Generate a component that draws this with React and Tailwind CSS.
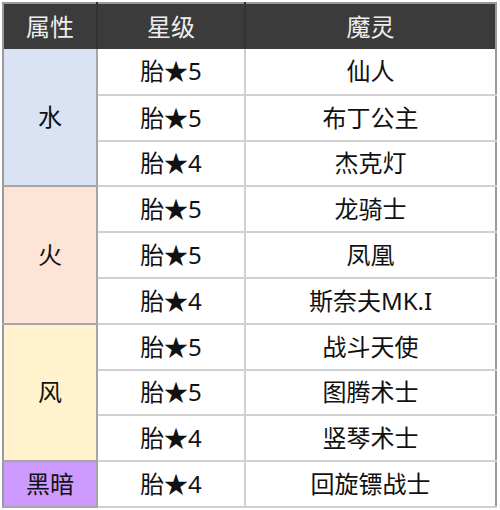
const groups = [
  {
    name: '水',
    bg: 'bg-[#dae3f3]',
    rows: [
      ['胎★5', '仙人'],
      ['胎★5', '布丁公主'],
      ['胎★4', '杰克灯'],
    ],
  },
  {
    name: '火',
    bg: 'bg-[#fce4d6]',
    rows: [
      ['胎★5', '龙骑士'],
      ['胎★5', '凤凰'],
      ['胎★4', '斯奈夫MK.I'],
    ],
  },
  {
    name: '风',
    bg: 'bg-[#fff2cc]',
    rows: [
      ['胎★5', '战斗天使'],
      ['胎★5', '图腾术士'],
      ['胎★4', '竖琴术士'],
    ],
  },
  {
    name: '黑暗',
    bg: 'bg-[#cc99ff]',
    rows: [['胎★4', '回旋镖战士']],
  },
];

export default function App() {
  return (
    <div className="w-[500px] h-[510px] bg-white pt-[2px] pl-[2px]">
      <table
        className="border-collapse w-[495px] text-[24px] text-[#111] border-2 border-[#9a9a9a]"
        style={{ fontFamily: '"Noto Sans", "Noto Sans CJK SC", sans-serif' }}
      >
        <colgroup>
          <col className="w-[94px]" />
          <col className="w-[148px]" />
          <col />
        </colgroup>
        <thead>
          <tr className="h-[46px] bg-[#3b3b3b] text-[#eeeeee]">
            <th className="font-normal border-r-2 border-[#333]">属性</th>
            <th className="font-normal border-r-2 border-[#333]">星级</th>
            <th className="font-normal">魔灵</th>
          </tr>
        </thead>
        <tbody>
          {groups.map((g) =>
            g.rows.map((r, i) => (
              <tr key={g.name + i} className="h-[45.8px]">
                {i === 0 && (
                  <td
                    rowSpan={g.rows.length}
                    className={`${g.bg} text-center border-r-2 border-b-2 border-[#a6a6a6] p-0`}
                  >
                    {g.name}
                  </td>
                )}
                <td className="text-center p-0 border-r-2 border-b-2 border-[#d0d0d0]">{r[0]}</td>
                <td className="text-center p-0 border-b-2 border-[#d0d0d0]">{r[1]}</td>
              </tr>
            ))
          )}
        </tbody>
      </table>
    </div>
  );
}
